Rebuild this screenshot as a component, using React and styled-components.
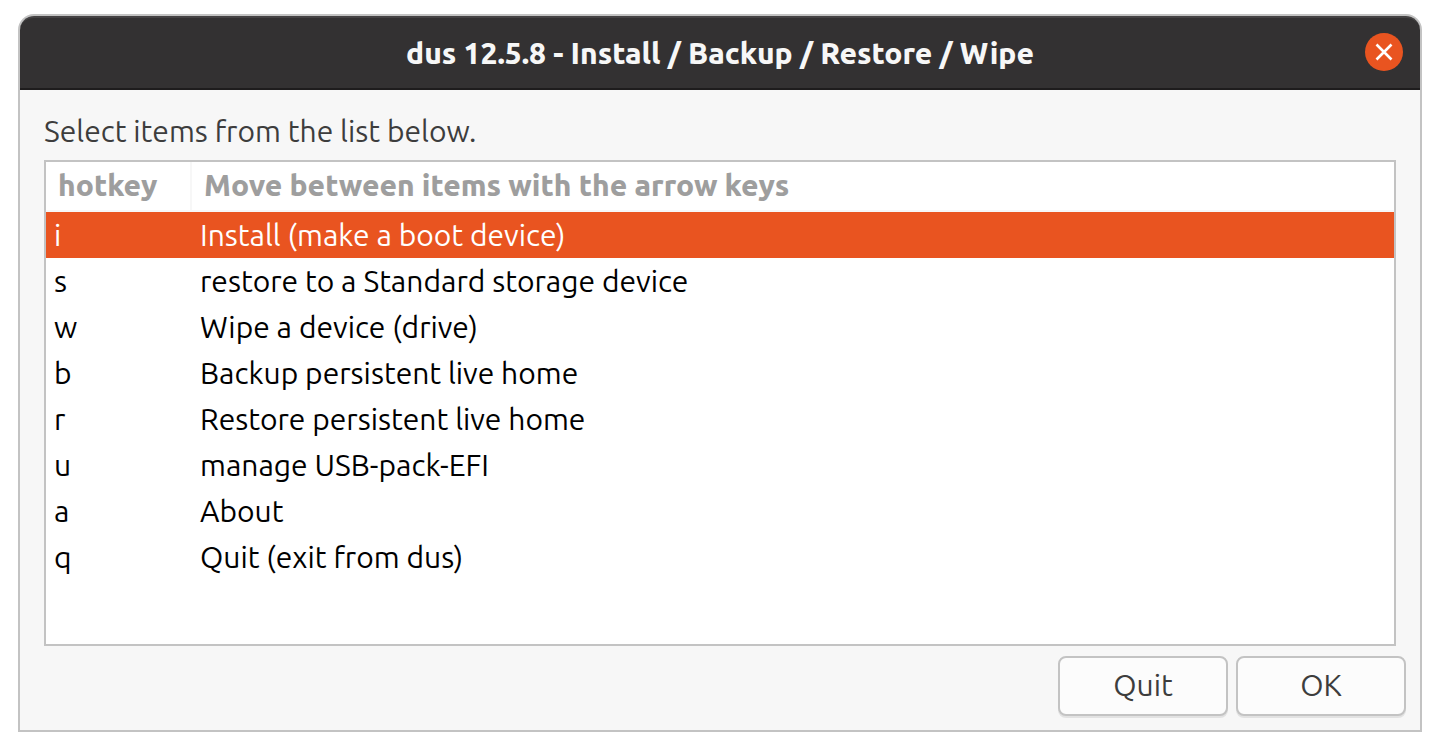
import React, { useState } from "react";
import styled, { createGlobalStyle } from "styled-components";

const GlobalStyle = createGlobalStyle`
  * { box-sizing: border-box; }
  body {
    margin: 0;
    background: #ffffff;
    font-family: Ubuntu, "Noto Sans", sans-serif;
    font-size: 30px;
    line-height: 40px;
    color: #3d3d3d;
  }
`;

const Page = styled.div`
  display: flex;
  min-height: 100vh;
  padding: 14px 18px 18px;
`;

const Dialog = styled.main`
  flex: 1;
  min-width: 0;
  display: flex;
  flex-direction: column;
  background: #f7f7f7;
  border: 2px solid #c3c3c3;
  border-radius: 16px 16px 0 0;
`;

const TitleBar = styled.header`
  display: grid;
  grid-template-columns: 38px 1fr 38px;
  align-items: start;
  padding: 15px 17px 15px;
  background: #333132;
  border-top: 2px solid #444243;
  border-bottom: 2px solid #1e1c1d;
  border-radius: 14px 14px 0 0;
`;

const Title = styled.h1`
  grid-column: 2;
  margin: 0;
  font-size: 30px;
  line-height: 40px;
  font-weight: 800;
  text-align: center;
  color: #f7f7f7;
`;

const CloseButton = styled.button`
  display: grid;
  place-items: center;
  width: 38px;
  height: 38px;
  padding: 0;
  border: 0;
  border-radius: 50%;
  background: #e95420;
  color: #ffffff;
`;

const Body = styled.div`
  flex: 1;
  display: flex;
  flex-direction: column;
  padding: 21px 14px 14px 24px;
`;

const Prompt = styled.p`
  margin: 0 0 9px;
`;

const ListFrame = styled.div`
  flex: 1;
  margin-right: 10px;
  background: #ffffff;
  border: 2px solid #c3c3c3;
`;

const ItemTable = styled.table`
  width: 100%;
  table-layout: fixed;
  border-collapse: separate;
  border-spacing: 0;
  text-align: left;
`;

const HeadCell = styled.th`
  width: ${(p) => (p.$narrow ? "146px" : "auto")};
  height: 50px;
  padding: 0 12px 2px;
  border-bottom: 2px solid #f7f7f7;
  border-right: ${(p) => (p.$narrow ? "2px solid #f7f7f7" : "0")};
  font-weight: 800;
  color: #9e9e9e;
`;

const Row = styled.tr`
  background: ${(p) => (p.$selected ? "#e95420" : "#ffffff")};
  color: ${(p) => (p.$selected ? "#ffffff" : "#000000")};
`;

const Cell = styled.td`
  height: 46px;
  padding: 0 8px;
`;

const Actions = styled.footer`
  display: flex;
  justify-content: flex-end;
  gap: 8px;
  margin-top: 10px;
`;

const ActionButton = styled.button`
  width: 170px;
  height: 60px;
  padding: 0 0 2px;
  border: 2px solid #c3c3c3;
  border-radius: 8px;
  background: #fcfcfc;
  box-shadow: 0 2px 0 #e2e2e2;
  font: inherit;
  color: #3d3d3d;
`;

const items = [
  ["i", "Install (make a boot device)"],
  ["s", "restore to a Standard storage device"],
  ["w", "Wipe a device (drive)"],
  ["b", "Backup persistent live home"],
  ["r", "Restore persistent live home"],
  ["u", "manage USB-pack-EFI"],
  ["a", "About"],
  ["q", "Quit (exit from dus)"],
];

export default function App() {
  const [selected, setSelected] = useState("i");

  return (
    <Page>
      <GlobalStyle />
      <Dialog>
        <TitleBar>
          <Title>dus 12.5.8 - Install / Backup / Restore / Wipe</Title>
          <CloseButton type="button" aria-label="Close">
            <svg width="18" height="18" viewBox="0 0 18 18" aria-hidden="true">
              <path d="M1.5 1.5 16.5 16.5M16.5 1.5 1.5 16.5" fill="none" stroke="currentColor" strokeWidth="2.6" />
            </svg>
          </CloseButton>
        </TitleBar>
        <Body>
          <Prompt id="prompt">Select items from the list below.</Prompt>
          <ListFrame>
            <ItemTable aria-labelledby="prompt">
              <thead>
                <tr>
                  <HeadCell scope="col" $narrow>hotkey</HeadCell>
                  <HeadCell scope="col">Move between items with the arrow keys</HeadCell>
                </tr>
              </thead>
              <tbody>
                {items.map(([key, label]) => (
                  <Row key={key} $selected={key === selected} onClick={() => setSelected(key)}>
                    <Cell>{key}</Cell>
                    <Cell>{label}</Cell>
                  </Row>
                ))}
              </tbody>
            </ItemTable>
          </ListFrame>
          <Actions>
            <ActionButton type="button">Quit</ActionButton>
            <ActionButton type="button">OK</ActionButton>
          </Actions>
        </Body>
      </Dialog>
    </Page>
  );
}
